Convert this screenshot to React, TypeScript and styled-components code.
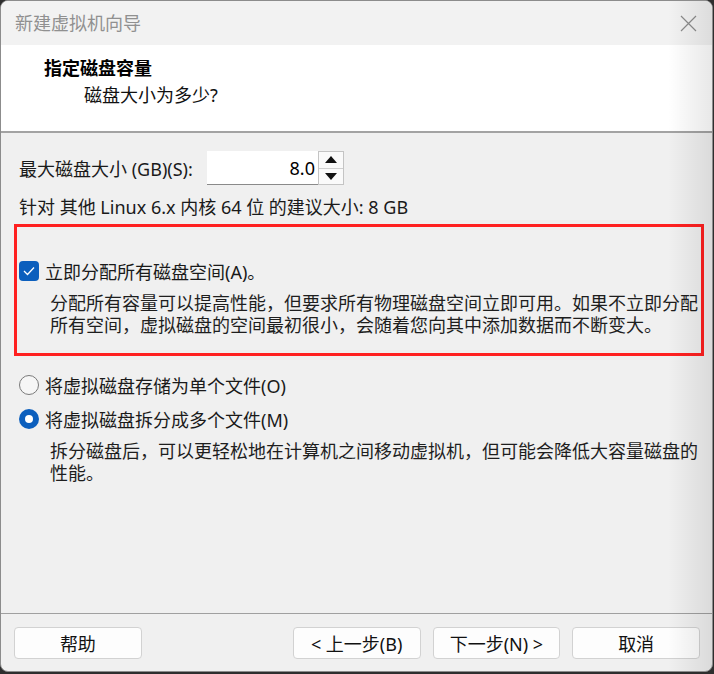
import styled, { createGlobalStyle } from 'styled-components'

const GlobalStyle = createGlobalStyle`
  html, body {
    margin: 0;
    padding: 0;
    background: #2e2e2e;
  }
  body {
    font-family: 'Noto Sans', 'Noto Sans CJK SC', sans-serif;
    font-size: 18px;
    color: #1a1a1a;
  }
`

const Window = styled.div`
  position: relative;
  box-sizing: border-box;
  width: 713px;
  height: 672px;
  display: flex;
  flex-direction: column;
  background: #f0f0f0;
  border: 1px solid #8c8c8c;
  border-radius: 8px;
  overflow: hidden;

  &::after {
    content: '';
    position: absolute;
    top: 0;
    right: 0;
    bottom: 0;
    width: 44px;
    pointer-events: none;
    background: linear-gradient(to right, rgba(0, 0, 0, 0), rgba(0, 0, 0, 0.09));
  }
`

const TitleBar = styled.div`
  height: 44px;
  display: flex;
  align-items: center;
  justify-content: space-between;
  padding: 0 14px 0 14px;
  background: #f2f2f2;
`

const Title = styled.div`
  color: #909090;
  font-size: 18px;
  line-height: 22px;
`

const CloseButton = styled.div`
  width: 18px;
  height: 18px;
  display: flex;
  align-items: center;
  justify-content: center;
  margin-right: 1px;
`

const Header = styled.div`
  height: 88px;
  background: #fff;
  border-bottom: 2px solid #a3a3a3;
  padding: 12px 0 0 43px;
  box-sizing: border-box;
`

const Heading = styled.div`
  font-weight: 700;
  font-size: 18px;
  line-height: 22px;
  color: #000;
`

const SubHeading = styled.div`
  margin: 5px 0 0 40px;
  line-height: 22px;
  color: #111;
`

const Content = styled.div`
  flex: 1;
  display: flex;
  flex-direction: column;
  padding: 0 8px 0 13px;
`

const SizeRow = styled.div`
  margin: 18px 0 0 5px;
  display: flex;
  align-items: center;
  height: 34px;
`

const Label = styled.span`
  width: 188px;
`

const Spin = styled.div`
  display: flex;
  height: 34px;
`

const SpinInput = styled.div`
  width: 111px;
  box-sizing: border-box;
  height: 34px;
  background: #fff;
  border-bottom: 1px solid #8a8a8a;
  padding-right: 3px;
  display: flex;
  align-items: center;
  justify-content: flex-end;
  color: #000;
`

const SpinButtons = styled.div`
  width: 26px;
  box-sizing: border-box;
  display: flex;
  flex-direction: column;
  border: 1px solid #c4c4c4;
  background: #f7f7f7;
`

const SpinButton = styled.div<{ down?: boolean }>`
  flex: 1;
  display: flex;
  align-items: center;
  justify-content: center;
  border-top: ${({ down }) => (down ? '1px solid #d0d0d0' : 'none')};
  background: #fafafa;
`

const Arrow = styled.div<{ down?: boolean }>`
  width: 0;
  height: 0;
  border-left: 6px solid transparent;
  border-right: 6px solid transparent;
  ${({ down }) => (down ? 'border-top: 7px solid #111;' : 'border-bottom: 7px solid #111;')}
`

const TextLine = styled.div<{ top?: number; left?: number }>`
  margin-top: ${({ top }) => top ?? 0}px;
  margin-left: ${({ left }) => left ?? 0}px;
  line-height: 22px;
`

const Highlight = styled.div`
  margin-top: 6px;
  border: 3px solid #ff2020;
  padding: 32px 0 17px 2px;
  display: flex;
  flex-direction: column;
`

const OptionRow = styled.label<{ top?: number; left?: number }>`
  display: flex;
  align-items: center;
  gap: 6px;
  height: 24px;
  margin-top: ${({ top }) => top ?? 0}px;
  margin-left: ${({ left }) => left ?? 0}px;
`

const CheckBox = styled.span`
  width: 20px;
  height: 20px;
  border-radius: 4px;
  background: #0c5fbd;
  display: flex;
  align-items: center;
  justify-content: center;
`

const Radio = styled.span<{ checked?: boolean }>`
  box-sizing: border-box;
  width: 20px;
  height: 20px;
  border-radius: 50%;
  display: flex;
  align-items: center;
  justify-content: center;
  background: ${({ checked }) => (checked ? '#0c5fbd' : '#f6f6f6')};
  border: ${({ checked }) => (checked ? 'none' : '1px solid #7a7a7a')};

  &::after {
    content: '';
    display: ${({ checked }) => (checked ? 'block' : 'none')};
    width: 8px;
    height: 8px;
    border-radius: 50%;
    background: #fff;
  }
`

const Description = styled.div<{ top?: number; left?: number }>`
  margin-top: ${({ top }) => top ?? 0}px;
  margin-left: ${({ left }) => left ?? 0}px;
  line-height: 22px;
  color: #1e1e1e;
`

const Footer = styled.div`
  border-top: 1px solid #a0a0a0;
  padding: 13px 12px 12px 13px;
  display: flex;
  align-items: center;
`

const Button = styled.div<{ gapBefore?: number }>`
  box-sizing: border-box;
  width: 128px;
  height: 32px;
  margin-left: ${({ gapBefore }) => gapBefore ?? 0}px;
  border: 1px solid #d2d2d2;
  border-radius: 4px;
  background: #fdfdfd;
  display: flex;
  align-items: center;
  justify-content: center;
  color: #111;
`

export default function App() {
  return (
    <>
      <GlobalStyle />
      <Window>
        <TitleBar>
          <Title>新建虚拟机向导</Title>
          <CloseButton>
            <svg width="17" height="17" viewBox="0 0 17 17">
              <path d="M1 1 L16 16 M16 1 L1 16" stroke="#8c8c8c" strokeWidth="1.2" fill="none" />
            </svg>
          </CloseButton>
        </TitleBar>
        <Header>
          <Heading>指定磁盘容量</Heading>
          <SubHeading>磁盘大小为多少?</SubHeading>
        </Header>
        <Content>
          <SizeRow>
            <Label>最大磁盘大小 (GB)(S):</Label>
            <Spin>
              <SpinInput>8.0</SpinInput>
              <SpinButtons>
                <SpinButton>
                  <Arrow />
                </SpinButton>
                <SpinButton down>
                  <Arrow down />
                </SpinButton>
              </SpinButtons>
            </Spin>
          </SizeRow>
          <TextLine top={11} left={5}>
            针对 其他 Linux 6.x 内核 64 位 的建议大小: 8 GB
          </TextLine>
          <Highlight>
            <OptionRow>
              <CheckBox>
                <svg width="12" height="10" viewBox="0 0 12 10">
                  <path d="M1 5 L4.5 8.5 L11 1.5" stroke="#fff" strokeWidth="1.3" fill="none" />
                </svg>
              </CheckBox>
              立即分配所有磁盘空间(A)。
            </OptionRow>
            <Description top={9} left={31}>
              分配所有容量可以提高性能，但要求所有物理磁盘空间立即可用。如果不立即分配
              <br />
              所有空间，虚拟磁盘的空间最初很小，会随着您向其中添加数据而不断变大。
            </Description>
          </Highlight>
          <OptionRow top={17} left={5}>
            <Radio />
            将虚拟磁盘存储为单个文件(O)
          </OptionRow>
          <OptionRow top={10} left={5}>
            <Radio checked />
            将虚拟磁盘拆分成多个文件(M)
          </OptionRow>
          <Description top={9} left={36}>
            拆分磁盘后，可以更轻松地在计算机之间移动虚拟机，但可能会降低大容量磁盘的
            <br />
            性能。
          </Description>
        </Content>
        <Footer>
          <Button>帮助</Button>
          <Button gapBefore={151}>&lt; 上一步(B)</Button>
          <Button gapBefore={12}>下一步(N) &gt;</Button>
          <Button gapBefore={12}>取消</Button>
        </Footer>
      </Window>
    </>
  )
}
